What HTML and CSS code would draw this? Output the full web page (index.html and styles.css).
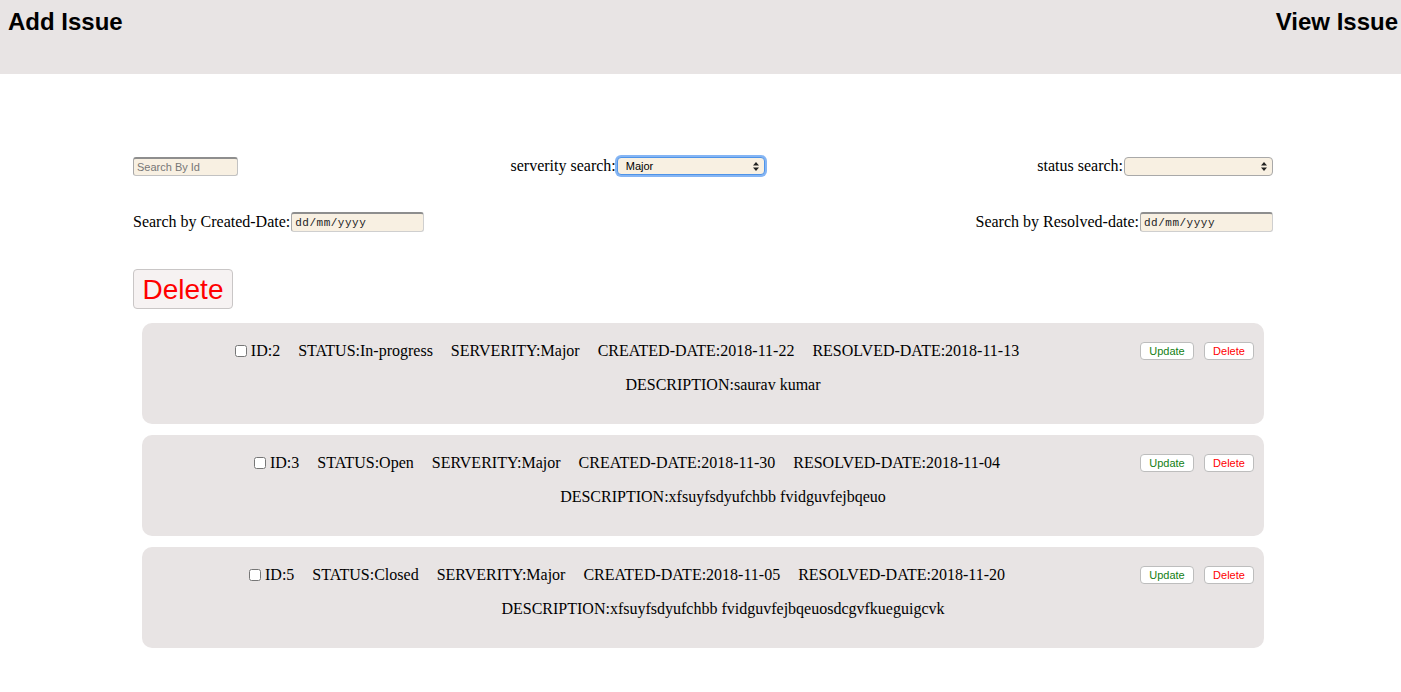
FILE: index.html
```html
<!DOCTYPE html>
<html>
<head>
<meta charset="utf-8">
<link rel="stylesheet" href="styles.css">
</head>
<body>
<header class="topbar">
  <h2 class="nav-title">Add Issue</h2>
  <h2 class="nav-title">View Issue</h2>
</header>

<main class="main">
  <div class="filter-row">
    <input class="search-id" type="text" placeholder="Search By Id">
    <label class="field">serverity search:<span class="select-wrap focused"><select class="sel"><option>Major</option></select><svg class="arrows" width="6" height="9" viewBox="0 0 6 9"><path d="M3 0 L6 3.5 H0 Z M3 9 L6 5.5 H0 Z" fill="#222"/></svg></span></label>
    <label class="field">status search:<span class="select-wrap status"><select class="sel"><option></option></select><svg class="arrows" width="6" height="9" viewBox="0 0 6 9"><path d="M3 0 L6 3.5 H0 Z M3 9 L6 5.5 H0 Z" fill="#222"/></svg></span></label>
  </div>

  <div class="filter-row second">
    <label class="field">Search by Created-Date:<input class="date" type="text" placeholder="dd/mm/yyyy"></label>
    <label class="field">Search by Resolved-date:<input class="date" type="text" placeholder="dd/mm/yyyy"></label>
  </div>

  <button class="big-delete">Delete</button>

  <div class="cards">
    <div class="card">
      <div class="card-top">
        <div class="fields">
          <input class="chk" type="checkbox">
          <span>ID:2</span><span>STATUS:In-progress</span><span>SERVERITY:Major</span><span>CREATED-DATE:2018-11-22</span><span>RESOLVED-DATE:2018-11-13</span>
        </div>
        <div class="actions"><button class="sm update">Update</button><button class="sm del">Delete</button></div>
      </div>
      <div class="desc">DESCRIPTION:saurav kumar</div>
    </div>

    <div class="card">
      <div class="card-top">
        <div class="fields">
          <input class="chk" type="checkbox">
          <span>ID:3</span><span>STATUS:Open</span><span>SERVERITY:Major</span><span>CREATED-DATE:2018-11-30</span><span>RESOLVED-DATE:2018-11-04</span>
        </div>
        <div class="actions"><button class="sm update">Update</button><button class="sm del">Delete</button></div>
      </div>
      <div class="desc">DESCRIPTION:xfsuyfsdyufchbb fvidguvfejbqeuo</div>
    </div>

    <div class="card">
      <div class="card-top">
        <div class="fields">
          <input class="chk" type="checkbox">
          <span>ID:5</span><span>STATUS:Closed</span><span>SERVERITY:Major</span><span>CREATED-DATE:2018-11-05</span><span>RESOLVED-DATE:2018-11-20</span>
        </div>
        <div class="actions"><button class="sm update">Update</button><button class="sm del">Delete</button></div>
      </div>
      <div class="desc">DESCRIPTION:xfsuyfsdyufchbb fvidguvfejbqeuosdcgvfkueguigcvk</div>
    </div>
  </div>
</main>
</body>
</html>
```

FILE: styles.css
```css
* { box-sizing: border-box; }

body {
  margin: 0;
  font-family: "Liberation Serif", "Times New Roman", serif;
  font-size: 16px;
  color: #000;
  background: #fff;
}

.topbar {
  height: 74px;
  background: #e8e4e4;
  display: flex;
  justify-content: space-between;
  align-items: flex-start;
  padding: 8px 3px 0 8px;
}

.nav-title {
  margin: 0;
  font-family: "Liberation Sans", Arial, sans-serif;
  font-size: 24px;
  font-weight: bold;
  line-height: 27px;
}

.main {
  width: 1140px;
  margin-left: 133px;
  padding-top: 80px;
}

.filter-row {
  display: flex;
  justify-content: space-between;
  align-items: center;
  height: 24px;
}

.filter-row.second {
  margin-top: 32px;
}

.field {
  display: flex;
  align-items: center;
  line-height: 18px;
}

.search-id {
  width: 105px;
  height: 19px;
  margin: 0;
  padding: 0 3px;
  background: #f8f0e2;
  border: 1px solid #c2c2c2;
  border-top: 2px solid #8e8e8e;
  border-left-color: #a8a8a8;
  border-radius: 3px;
  font-family: "Liberation Sans", Arial, sans-serif;
  font-size: 11px;
  outline: none;
}
.search-id::placeholder { color: #777; }

.select-wrap {
  position: relative;
  display: inline-block;
  margin-left: 1px;
}

.sel {
  appearance: none;
  -webkit-appearance: none;
  display: block;
  width: 149px;
  height: 19px;
  margin: 0;
  padding: 0 14px 0 8px;
  background: #f8f0e2;
  border: 1px solid #a9a9a9;
  border-radius: 4px;
  font-family: "Liberation Sans", Arial, sans-serif;
  font-size: 11px;
  color: #000;
  outline: none;
}

.select-wrap.focused .sel {
  width: 148px;
  height: 18px;
  border-color: #4f94e8;
  box-shadow: 0 0 0 2px rgba(92, 156, 240, 0.75);
}

.arrows {
  position: absolute;
  right: 6px;
  top: 5px;
}

.date {
  width: 133px;
  height: 20px;
  margin: 0 0 0 1px;
  padding: 0 3px;
  background: #f8f0e2;
  border: 1px solid #cfcfcf;
  border-top: 2px solid #8e8e8e;
  border-left-color: #a8a8a8;
  border-radius: 3px;
  font-family: "Liberation Mono", "Courier New", monospace;
  font-size: 11px;
  letter-spacing: 0.5px;
  outline: none;
}
.date::placeholder { color: #222; }

.big-delete {
  display: block;
  margin-top: 35px;
  width: 100px;
  height: 40px;
  padding: 0;
  background: #f6f2f2;
  border: 1px solid #c9c6c6;
  border-radius: 4px;
  color: #ff0000;
  font-family: "Liberation Sans", Arial, sans-serif;
  font-size: 28px;
  line-height: 40px;
}

.cards {
  margin-top: 14px;
  margin-left: 9px;
  width: 1122px;
  display: flex;
  flex-direction: column;
  gap: 11px;
}

.card {
  background: #e8e4e4;
  border-radius: 10px;
  padding: 19px 0 30px 40px;
}

.card-top {
  display: flex;
  align-items: center;
  height: 18px;
}

.fields {
  flex: 1;
  display: flex;
  justify-content: center;
  align-items: center;
  gap: 18px;
  line-height: 18px;
  white-space: nowrap;
}

.chk {
  width: 12px;
  height: 12px;
  margin: 0 -14px 0 0;
}

.actions {
  width: 192px;
  display: flex;
  justify-content: flex-end;
  gap: 10px;
  padding-right: 10px;
}

.sm {
  height: 18px;
  margin: 0;
  padding: 0 8px;
  background: #fff;
  border: 1px solid #bdbdbd;
  border-radius: 4px;
  font-family: "Liberation Sans", Arial, sans-serif;
  font-size: 11px;
  line-height: 16px;
}
.sm.update { color: #138013; width: 54px; }
.sm.del { color: #ff0000; width: 50px; }

.desc {
  margin-top: 16px;
  text-align: center;
  line-height: 18px;
}
```
